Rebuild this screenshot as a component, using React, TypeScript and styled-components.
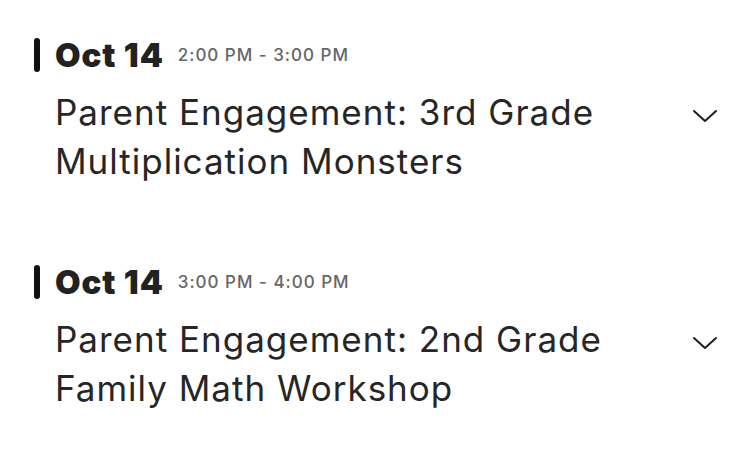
import React from "react";
import styled, { createGlobalStyle } from "styled-components";

const events = [
  {
    date: "Oct 14",
    time: "2:00 PM - 3:00 PM",
    title: "Parent Engagement: 3rd Grade Multiplication Monsters",
  },
  {
    date: "Oct 14",
    time: "3:00 PM - 4:00 PM",
    title: "Parent Engagement: 2nd Grade Family Math Workshop",
  },
];

const Chevron = () => (
  <svg width="26" height="16" viewBox="0 0 26 16" fill="none">
    <path
      d="M2 3 L13 13 L24 3"
      stroke="#1e1e1e"
      strokeWidth="2"
      strokeLinecap="round"
      strokeLinejoin="round"
    />
  </svg>
);

const App = () => {
  return (
    <>
      <GlobalStyle />
      <List>
        {events.map((e, i) => (
          <Item key={i}>
            <Header>
              <Bar />
              <DateText>{e.date}</DateText>
              <TimeText>{e.time}</TimeText>
            </Header>
            <Body>
              <Title>{e.title}</Title>
              <Toggle>
                <Chevron />
              </Toggle>
            </Body>
          </Item>
        ))}
      </List>
    </>
  );
};

export default App;

const GlobalStyle = createGlobalStyle`
  body {
    margin: 0;
    background: #fff;
    font-family: Inter, "Noto Sans", sans-serif;
    color: #262626;
  }
`;

const List = styled.div`
  display: flex;
  flex-direction: column;
  gap: 77px;
  padding: 36px 32px 0 34px;
`;

const Item = styled.div`
  display: flex;
  flex-direction: column;
`;

const Header = styled.div`
  display: flex;
  align-items: center;
  height: 38px;
`;

const Bar = styled.div`
  width: 6px;
  height: 34px;
  border-radius: 3px;
  background: #111;
  margin-right: 15px;
`;

const DateText = styled.div`
  font-size: 33px;
  font-weight: 900;
  letter-spacing: 0.9px;
  color: #222;
  margin-right: 14px;
`;

const TimeText = styled.div`
  font-size: 17px;
  font-weight: 500;
  color: #666;
  letter-spacing: 1px;
`;

const Body = styled.div`
  display: flex;
  align-items: flex-start;
  justify-content: space-between;
  padding-left: 21px;
  margin-top: 14px;
`;

const Title = styled.div`
  font-size: 35px;
  line-height: 49px;
  font-weight: 400;
  color: #262626;
  max-width: 610px;
  letter-spacing: 1px;
`;

const Toggle = styled.div`
  padding-top: 20px;
`;
